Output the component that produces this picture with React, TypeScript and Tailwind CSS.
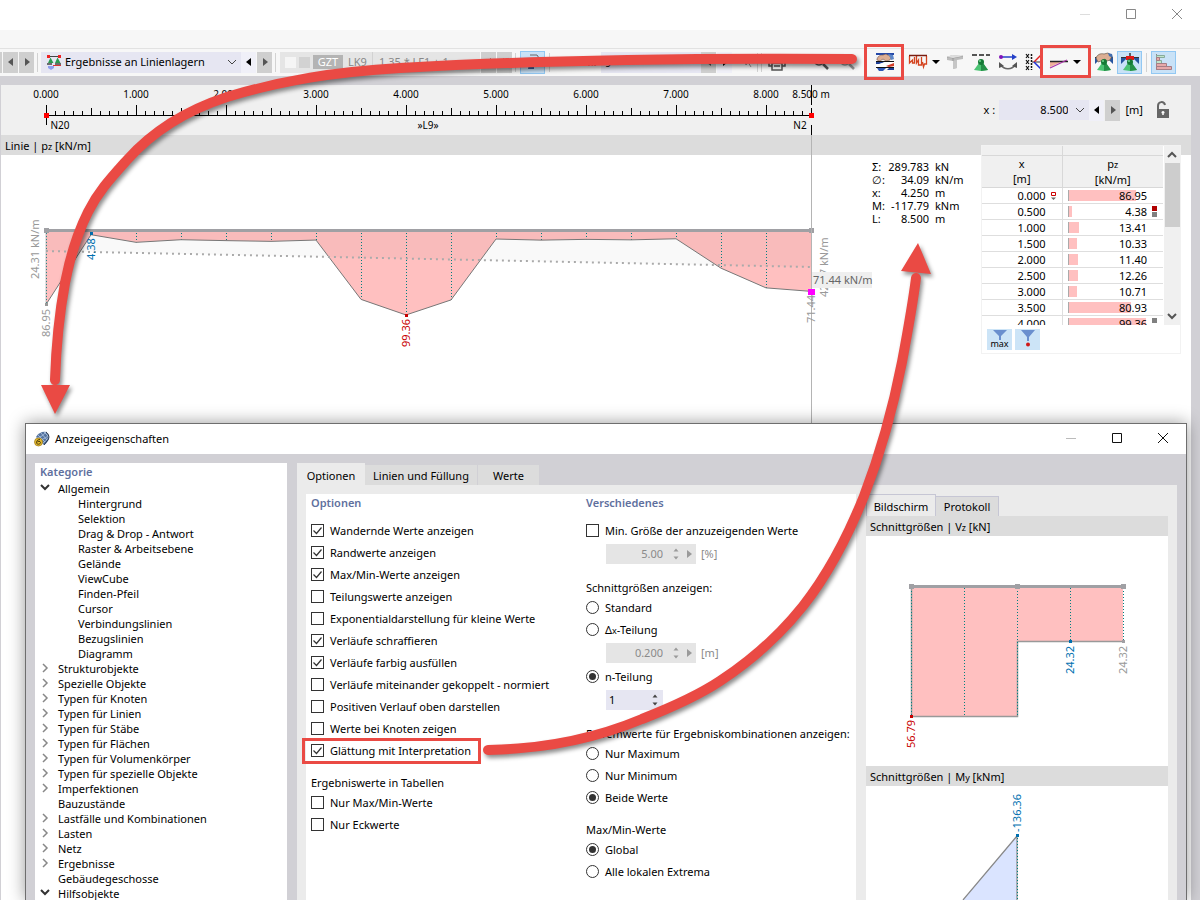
import { useState } from "react";
import type { ReactNode } from "react";
import clsx from "clsx";

const forces = [
    86.95, 4.38, 13.41, 10.33, 11.4, 12.26, 10.71, 80.93, 99.36, 81.6, 9.5, 10.8, 9.9, 10.5, 9.2, 44, 67.3, 71.44,
];

const tableRows = [
    { x: "0.000", value: 86.95, mark: "start" },
    { x: "0.500", value: 4.38, mark: "min" },
    { x: "1.000", value: 13.41 },
    { x: "1.500", value: 10.33 },
    { x: "2.000", value: 11.4 },
    { x: "2.500", value: 12.26 },
    { x: "3.000", value: 10.71 },
    { x: "3.500", value: 80.93 },
    { x: "4.000", value: 99.36, mark: "max" },
];

const stats = [
    ["Σ:", "289.783", "kN"],
    ["∅:", "34.09", "kN/m"],
    ["x:", "4.250", "m"],
    ["M:", "-117.79", "kNm"],
    ["L:", "8.500", "m"],
];

const categories: { label: string; state?: "open" | "closed"; child?: boolean }[] = [
    { label: "Allgemein", state: "open" },
    { label: "Hintergrund", child: true },
    { label: "Selektion", child: true },
    { label: "Drag & Drop - Antwort", child: true },
    { label: "Raster & Arbeitsebene", child: true },
    { label: "Gelände", child: true },
    { label: "ViewCube", child: true },
    { label: "Finden-Pfeil", child: true },
    { label: "Cursor", child: true },
    { label: "Verbindungslinien", child: true },
    { label: "Bezugslinien", child: true },
    { label: "Diagramm", child: true },
    { label: "Strukturobjekte", state: "closed" },
    { label: "Spezielle Objekte", state: "closed" },
    { label: "Typen für Knoten", state: "closed" },
    { label: "Typen für Linien", state: "closed" },
    { label: "Typen für Stäbe", state: "closed" },
    { label: "Typen für Flächen", state: "closed" },
    { label: "Typen für Volumenkörper", state: "closed" },
    { label: "Typen für spezielle Objekte", state: "closed" },
    { label: "Imperfektionen", state: "closed" },
    { label: "Bauzustände" },
    { label: "Lastfälle und Kombinationen", state: "closed" },
    { label: "Lasten", state: "closed" },
    { label: "Netz", state: "closed" },
    { label: "Ergebnisse", state: "closed" },
    { label: "Gebäudegeschosse" },
    { label: "Hilfsobjekte", state: "open" },
];

const displayOptions = [
    { label: "Wandernde Werte anzeigen", on: true },
    { label: "Randwerte anzeigen", on: true },
    { label: "Max/Min-Werte anzeigen", on: true },
    { label: "Teilungswerte anzeigen", on: false },
    { label: "Exponentialdarstellung für kleine Werte", on: false },
    { label: "Verläufe schraffieren", on: true },
    { label: "Verläufe farbig ausfüllen", on: true },
    { label: "Verläufe miteinander gekoppelt - normiert", on: false },
    { label: "Positiven Verlauf oben darstellen", on: false },
    { label: "Werte bei Knoten zeigen", on: false },
    { label: "Glättung mit Interpretation", on: true },
];

/* ---------- small shared parts ---------- */

function Triangle({ dir, className }: { dir: "left" | "right" | "down"; className?: string }) {
    const d = { left: "M6 0v8L1 4z", right: "M2 0v8l5-4z", down: "M0 2h8L4 6z" }[dir];
    return (
        <svg className={clsx("h-2 w-2 shrink-0", className)} viewBox="0 0 8 8" fill="currentColor">
            <path d={d} />
        </svg>
    );
}

function Chevron({ dir = "down", className }: { dir?: "down" | "up" | "right"; className?: string }) {
    const d = { down: "M1 3l4 4 4-4", up: "M1 7l4-4 4 4", right: "M3 1l4 4-4 4" }[dir];
    return (
        <svg className={clsx("h-[10px] w-[10px] shrink-0", className)} viewBox="0 0 10 10" fill="none" stroke="currentColor">
            <path d={d} />
        </svg>
    );
}

function StepButton({ dir, light }: { dir: "left" | "right"; light?: boolean }) {
    return (
        <button
            aria-label={dir === "left" ? "Zurück" : "Weiter"}
            className={clsx(
                "flex h-[21px] w-[15px] shrink-0 items-center justify-center",
                light ? "bg-[#f0f0f8] text-black" : "bg-[#cfcfcf] text-[#555]"
            )}
        >
            <Triangle dir={dir} />
        </button>
    );
}

function Sep() {
    return <div className="h-[19px] w-px shrink-0 bg-[#d2d2d2]" />;
}

function WindowButtons({ color, dim }: { color: string; dim: string }) {
    return (
        <div className="ml-auto flex items-center">
            <button aria-label="Minimieren" className="flex h-[30px] w-[46px] items-center justify-center">
                <svg className="h-3 w-3" viewBox="0 0 12 12" stroke={dim}>
                    <path d="M1 5.5h10" />
                </svg>
            </button>
            <button aria-label="Maximieren" className="flex h-[30px] w-[46px] items-center justify-center">
                <svg className="h-3 w-3" viewBox="0 0 12 12" fill="none" stroke={color}>
                    <path d="M1.500 0.500h9v9h-9z" />
                </svg>
            </button>
            <button aria-label="Schließen" className="flex h-[30px] w-[46px] items-center justify-center">
                <svg className="h-3 w-3" viewBox="0 0 12 12" fill="none" stroke={color}>
                    <path d="M1 0l10 10M11 0L1 10" />
                </svg>
            </button>
        </div>
    );
}

function CheckRow({ label, on }: { label: string; on?: boolean }) {
    return (
        <label className="flex h-[22px] items-center gap-[6px] whitespace-nowrap">
            <span className="relative mb-[2px] flex h-[13px] w-[13px]">
                <input
                    type="checkbox"
                    defaultChecked={on}
                    className="peer h-[13px] w-[13px] appearance-none border border-[#333] bg-white"
                />
                <svg
                    className="pointer-events-none absolute inset-0 hidden h-[13px] w-[13px] peer-checked:block"
                    viewBox="0 0 13 13"
                    fill="none"
                    stroke="#333"
                    strokeWidth="1.2"
                >
                    <path d="M2.500 6.500l3 3 5-6" />
                </svg>
            </span>
            {label}
        </label>
    );
}

function RadioRow({ name, on, children }: { name: string; on?: boolean; children: ReactNode }) {
    return (
        <label className="flex h-[22px] items-center gap-[6px] whitespace-nowrap">
            <input
                type="radio"
                name={name}
                defaultChecked={on}
                className="mb-[2px] flex h-[13px] w-[13px] appearance-none items-center justify-center rounded-full border border-[#333] bg-white checked:before:h-[7px] checked:before:w-[7px] checked:before:rounded-full checked:before:bg-[#333]"
            />
            <span>{children}</span>
        </label>
    );
}

function Spinner() {
    return (
        <svg className="h-3 w-[6px] shrink-0" viewBox="0 0 6 12" fill="currentColor">
            <path d="M0.500 3.500h5L3 0.500zM0.500 8.500h5L3 11.500z" />
        </svg>
    );
}

function DisabledNumber({ value, unit }: { value: string; unit: string }) {
    return (
        <div className="mt-[2px] ml-5 flex h-5 items-center text-[#8a8a8a]">
            <div className="flex h-5 w-[90px] items-center bg-[#e5e5e5] pr-[3px] text-[#9a9a9a]">
                <input
                    disabled
                    aria-label={unit}
                    defaultValue={value}
                    className="w-[60px] min-w-0 bg-transparent text-right text-[11px] text-[#8a8a8a]"
                />
                <div className="ml-[10px] flex items-center gap-[6px]">
                    <Spinner />
                    <Triangle dir="right" />
                </div>
            </div>
            <span className="ml-[5px]">{unit}</span>
        </div>
    );
}

/* ---------- toolbar icons ---------- */

function SupportIcon() {
    return (
        <svg className="h-4 w-4 shrink-0" viewBox="0 0 16 16">
            <path d="M2 2.500h12" stroke="#444" />
            <path d="M1 1h3v3H1zM12 1h3v3h-3z" fill="#e22" />
            <path d="M4.500 3.500l3 5.500H2zM11.500 3.500l3 5.500H9z" fill="#2b9a52" />
            <path d="M1 10h5M9 10h6" stroke="#444" strokeWidth="1.500" />
            <path d="M7 11.500h8" stroke="#d33" />
            <path d="M2 12h6v2l-3 2-3-2z" fill="#8f9ff0" />
        </svg>
    );
}

function HandFlagIcon() {
    return (
        <svg className="h-[20px] w-[20px]" viewBox="0 0 20 20">
            <path d="M1 1h18v2H1z" fill="#2448a8" />
            <path d="M1 4h18v4H1z" fill="#eceff5" />
            <path d="M2 7c1-3 3-4 6-4l3-1 5 3-1 3-4 1-3-2-3 2-3-1z" fill="#dcae93" stroke="#7a584a" strokeWidth=".6" />
            <path d="M13 2l5 1 1 4-3 1-1-3z" fill="#5d86c7" />
            <path d="M1 9.500h18" stroke="#111" />
            <path d="M1 10h9l-5 2H1z" fill="#1d3f96" />
            <path d="M10 10h9v3l-9 2H1v-2z" fill="#fff" />
            <path d="M11 14l8-3v3l-5 1z" fill="#d43c27" />
            <path d="M1 15.500h18" stroke="#111" />
            <path d="M2 16h9l-3 3H4z" fill="#2b57b8" />
            <path d="M14 16h5v2h-7z" fill="#1d3f96" />
        </svg>
    );
}

function DiagramIcon() {
    return (
        <svg className="h-4 w-[20px]" viewBox="0 0 20 16" fill="none">
            <path d="M1.500 2v7l3-3v3h2V3M8.500 2v7l2-3v5h3V3M14.500 8l1 5 1-3h2V2" stroke="#d4431e" strokeWidth="1.300" />
            <path d="M1 1.500h18" stroke="#7a1c10" strokeWidth="1.500" />
        </svg>
    );
}

function BeamIcon() {
    return (
        <svg className="h-[18px] w-[18px]" viewBox="0 0 18 18">
            <path d="M1 4l5-2 11 1v3l-6 1v8l-4 1V8L1 7z" fill="#bcbcbc" />
            <path d="M7 8l4-1v8l-4 1z" fill="#c6c6c6" />
            <path d="M1 4l6 1v3M7 5l10-2" stroke="#8d8d8d" fill="none" strokeWidth=".7" />
            <path d="M1 4l5-2 11 1-10 2z" fill="#dedede" />
        </svg>
    );
}

function ConeIcon({ top }: { top: "dash" | "hand" | "red" }) {
    return (
        <svg className="h-[20px] w-[20px]" viewBox="0 0 20 20">
            {top === "dash" && <path d="M1 3h5M8 3h5M15 3h4" stroke="#555" strokeWidth="2" />}
            {top !== "dash" && <path d="M1 6v6l6-6zM19 6v6l-6-6z" fill="#25549f" />}
            {top !== "dash" && <path d="M1 5.500h18" stroke="#333" />}
            {top === "hand" && (
                <path d="M2 6c1-3 4-5 8-4l4-1 4 3-2 4-3 1-2-2-4 2-3 1z" fill="#dcae93" stroke="#6a5a4d" strokeWidth=".7" />
            )}
            {top === "hand" && <path d="M14 1l4 1 1 4-4-2z" fill="#416dad" />}
            {top === "red" && <path d="M10 1v4" stroke="#333" strokeWidth="1.500" />}
            {top === "red" && <path d="M6 4h8v4H6z" fill="#e01818" />}
            <path d="M8 11h4l5 7-7 1-7-1z" fill="#4cc474" />
            <path d="M10 11h2l5 7-7 1z" fill="#259048" />
            <circle cx="10" cy="10" r="3" fill="#157a36" />
            <circle cx="9" cy="9" r="1" fill="#73d68e" />
        </svg>
    );
}

function SwapIcon() {
    return (
        <svg className="h-[18px] w-[20px]" viewBox="0 0 20 18" fill="none">
            <path d="M3 4h12" stroke="#2440c8" strokeWidth="1.500" />
            <circle cx="3" cy="4" r="2" fill="#8112b8" />
            <path d="M14 1l5 3-5 3z" fill="#2440c8" />
            <path d="M3 12c3 5 11 5 14 0" stroke="#666" strokeWidth="1.500" />
            <path d="M1 15V9l5 4zM19 15V9l-5 4z" fill="#555" />
        </svg>
    );
}

function AxesIcon() {
    return (
        <svg className="h-[18px] w-[18px]" viewBox="0 0 18 18" fill="none">
            <path d="M1 1l3 4M4 1L1 5M1 7l3 4M4 7l-3 4M1 13l3 4M4 13l-3 4" stroke="#111" strokeWidth="1.200" />
            <path d="M6.500 1v16" stroke="#111" strokeDasharray="2 1" strokeWidth="1.500" />
            <path d="M7 9h8" stroke="#333" />
            <path d="M9 9l7-7" stroke="#e32020" strokeWidth="1.500" />
            <path d="M9 9l7 7" stroke="#2030d8" strokeWidth="1.500" />
        </svg>
    );
}

function SmoothIcon() {
    return (
        <svg className="h-4 w-[20px]" viewBox="0 0 20 16" fill="none">
            <path d="M1 8h11L1 13z" fill="#f0b09a" />
            <path d="M1 7.500h18" stroke="#222" strokeWidth="1.500" />
            <path d="M1 14L18 6" stroke="#a833a8" strokeWidth="1.300" />
        </svg>
    );
}

function BarsIcon() {
    return (
        <svg className="h-[18px] w-[18px]" viewBox="0 0 18 18" fill="none">
            <path d="M1.500 1v16" stroke="#888" />
            <path d="M1.500 2.500h8v2h-8zM1.500 7.500h5v3h-5z" fill="#c3e4cb" stroke="#86ab9c" />
            <path d="M1.500 4.500h3v3h-3zM1.500 10.500h10v3h-10zM1.500 13.500h15v3h-15z" fill="#e7a9a9" stroke="#a67d85" />
        </svg>
    );
}

function SearchIcon({ color }: { color: string }) {
    return (
        <svg className="h-[18px] w-[18px]" viewBox="0 0 18 18" fill="none" stroke={color}>
            <circle cx="7" cy="7" r="5" strokeWidth="1.500" />
            <path d="M11 11l5 5" strokeWidth="2.500" />
        </svg>
    );
}

function PrintIcon() {
    return (
        <svg className="h-[18px] w-[18px]" viewBox="0 0 18 18" fill="none" stroke="#555" strokeWidth="1.500">
            <path d="M4 6V2h10v4M4 13H1V7h16v6h-3M4 10h10v7H4zM6 13h6" />
        </svg>
    );
}

function LockIcon() {
    return (
        <svg className="h-[18px] w-4" viewBox="0 0 16 18">
            <path d="M3 8V5c0-5 6-5 7-1" fill="none" stroke="#666" strokeWidth="2" />
            <path d="M2 8h12v9H2z" fill="#666" />
            <path d="M8 10v4M6.500 11.500h3" stroke="#fff" strokeWidth="1.500" />
        </svg>
    );
}

function AppIcon() {
    return (
        <svg className="h-4 w-4" viewBox="0 0 16 16">
            <path d="M2 6c2-4 7-6 10-5l3 4c1 3-2 7-5 9L7 11z" fill="#54739f" />
            <path d="M4 4l7 7M7 2l6 7M10 1l5 5M3 7c4-1 7-3 9-6M6 9c4-1 7-3 9-5M9 12c3-2 5-4 6-7" stroke="#bed1ea" strokeWidth=".7" fill="none" />
            <path d="M12 1c3 2 4 6 1 9l-3 4" stroke="#26344a" fill="none" />
            <circle cx="4.500" cy="11" r="4" fill="#e8be32" stroke="#9b7411" strokeWidth=".7" />
            <path d="M6 8.500c-3 0-3.500 2-3.500 3 0 2.500 4 2 4 0 0-1.500-3-1.700-3.500 0" fill="none" stroke="#4b3a08" />
        </svg>
    );
}

/* ---------- main window ---------- */

function Toolbar() {
    return (
        <div className="flex h-7 items-center overflow-hidden border-t border-[#e2e2e2] bg-[#f7f7f7] pb-px">
            <div className="flex items-center gap-[1px]">
                <span className="h-[21px] w-[2px] bg-[#cfcfcf]" />
                <StepButton dir="left" />
                <StepButton dir="right" />
            </div>
            <div className="mx-[3px] flex">
                <Sep />
            </div>
            <div className="flex h-[21px] w-[200px] shrink-0 items-center bg-[#e6e6f2] pr-1 pl-[5px]">
                <SupportIcon />
                <select
                    aria-label="Ergebnistyp"
                    className="ml-[3px] min-w-0 flex-1 appearance-none bg-transparent text-[11px] leading-4"
                >
                    <option>Ergebnisse an Linienlagern</option>
                </select>
                <Chevron className="text-[#444]" />
            </div>
            <div className="mr-[3px] flex gap-[1px]">
                <StepButton dir="left" light />
                <StepButton dir="right" />
            </div>
            <Sep />
            <div className="ml-1 flex h-[21px] w-[200px] shrink-0 items-center bg-[#e5e5e5] pl-[5px] text-[#888]">
                <span className="h-[11px] w-[11px] bg-[#f5f5f5]" />
                <span className="ml-[3px] h-[11px] w-[11px] bg-[#d2d2d2]" />
                <span className="ml-[3px] h-[14px] w-[30px] bg-[#b4b4b4] text-center leading-[14px] text-white">GZT</span>
                <span className="ml-[5px] w-6">LK9</span>
                <span className="mr-[6px] h-[21px] w-px bg-[#d2d2d2]" />
                <span className="whitespace-nowrap">1.35 * LF1 + 1</span>
            </div>
            <div className="mr-[3px] ml-[1px] flex gap-[1px]">
                <StepButton dir="left" />
                <StepButton dir="right" />
            </div>
            <Sep />
            <button
                aria-label="Objektinformation"
                className="mx-1 flex h-[23px] w-[25px] shrink-0 items-center justify-center border border-[#92c8f3] bg-[#c9e2f7]"
            >
                <svg className="h-4 w-4" viewBox="0 0 16 16" fill="none">
                    <path d="M5 1h7l2 3v7H9" stroke="#666" />
                    <path d="M3 15l1-6 5 1v5z" fill="#3b62a0" />
                </svg>
            </button>
            <Sep />
            <label htmlFor="line-no" className="ml-[5px] w-[46px] shrink-0 whitespace-nowrap">
                Linie Nr.
            </label>
            <input id="line-no" defaultValue="9" className="h-[21px] w-[100px] shrink-0 bg-[#e6e6f2] pl-1 text-[11px]" />
            <div className="flex gap-[1px]">
                <StepButton dir="left" />
                <StepButton dir="right" light />
            </div>
            <svg className="ml-2 h-4 w-4 shrink-0" viewBox="0 0 16 16" fill="none" stroke="#999">
                <path d="M4 3l8 4-4 1 3 5M4 3l2 8 2-3" />
            </svg>
            <div className="ml-px flex gap-[3px]">
                <Sep />
                <Sep />
            </div>
            <div className="ml-[6px] flex w-[88px] shrink-0 items-center justify-between">
                <PrintIcon />
                <div className="flex gap-2">
                    <SearchIcon color="#555" />
                    <SearchIcon color="#999" />
                </div>
            </div>
            <div className="ml-auto flex shrink-0 items-center pr-6">
                <button aria-label="Anzeigeeigenschaften">
                    <HandFlagIcon />
                </button>
                <div className="ml-[13px] flex items-center gap-1">
                    <DiagramIcon />
                    <Triangle dir="down" />
                </div>
                <div className="ml-[6px] flex items-center gap-[7px]">
                    <BeamIcon />
                    <ConeIcon top="dash" />
                    <SwapIcon />
                    <AxesIcon />
                </div>
                <div className="ml-[6px] flex items-center gap-1">
                    <SmoothIcon />
                    <Triangle dir="down" />
                </div>
                <div className="ml-[13px] flex items-center gap-[3px]">
                    <ConeIcon top="hand" />
                    <span className="flex h-[23px] w-[25px] items-center justify-center border border-[#92c8f3] bg-[#c9e2f7]">
                        <ConeIcon top="red" />
                    </span>
                    <span className="px-px">
                        <Sep />
                    </span>
                    <span className="flex h-[23px] w-[25px] items-center justify-center border border-[#92c8f3] bg-[#c9e2f7]">
                        <BarsIcon />
                    </span>
                </div>
            </div>
        </div>
    );
}

function Ruler() {
    return (
        <svg className="h-[50px] w-[860px] shrink-0" viewBox="0 85 860 50" fontSize="10" textAnchor="middle">
            <path d="M46 115.500H811" stroke="#000" />
            {Array.from({ length: 86 }, (_, i) => {
                const top = i % 10 === 0 ? 105 : i % 5 === 0 ? 108 : 111;
                return <path key={i} d={`M${46.5 + i * 9} ${top}V115`} stroke="#000" />;
            })}
            {[0, 1, 2, 3, 4, 5, 6, 7, 8].map((m) => (
                <text key={m} x={46 + m * 90} y="98">
                    {m}.000
                </text>
            ))}
            <text x="811" y="98">
                8.500 m
            </text>
            <path d="M46.500 105v20M811.500 85v20M811.500 125v10" stroke="#000" />
            <path d="M44 113h5v5h-5zM809 113h5v5h-5z" fill="#f00" />
            <text x="60" y="129">
                N20
            </text>
            <text x="428" y="129">
                »L9»
            </text>
            <text x="800" y="129">
                N2
            </text>
        </svg>
    );
}

function VerticalText({ x, y, fill, children }: { x: number; y: number; fill: string; children: ReactNode }) {
    return (
        <text transform={`translate(${x} ${y}) rotate(-90)`} fill={fill}>
            {children}
        </text>
    );
}

function ForceChart() {
    const points = forces.map((v, i) => [46 + i * 45, 231 + v * 0.845]);
    const line = points.map((p) => p.join(" ")).join("L");
    return (
        <svg className="h-[268px] w-[870px] shrink-0 overflow-visible" viewBox="0 155 870 268" fontSize="11">
            <path d={`M46 231L${line}L811 231z`} fill="#ffc0c0" />
            <path d="M46 231v20L811 267v-36z" fill="#000" opacity=".025" />
            {points.map(([x, y]) => (
                <path key={x} d={`M${x + 0.5} 233V${y}`} stroke="#008080" strokeDasharray="1 2" />
            ))}
            <path d={`M${line}`} fill="none" stroke="#777" />
            <path d="M46 251L811 267" stroke="#aaa" strokeWidth="2" strokeDasharray="2 4" />
            <path d="M46 231V304" stroke="#999" strokeWidth="1" opacity=".6" />
            <path d="M46 230.500H811" stroke="#a0a0a4" strokeWidth="3" />
            <path d="M44 228h5v5h-5zM809 228h5v5h-5z" fill="#a0a0a4" />
            <path d="M45 303h3v3h-3z" fill="#999" />
            <path d="M90 232h3v3h-3z" fill="#0070b0" />
            <path d="M405 314h3v3h-3z" fill="#c80000" />
            <path d="M811.500 135V423" stroke="#b4b4b4" />
            <VerticalText x={39} y={279} fill="#999">24.31 kN/m</VerticalText>
            <VerticalText x={50} y={337} fill="#999">86.95</VerticalText>
            <VerticalText x={95} y={260} fill="#0070b0">4.38</VerticalText>
            <VerticalText x={410} y={347} fill="#c80000">99.36</VerticalText>
            <VerticalText x={815} y={323} fill="#999">71.44</VerticalText>
            <VerticalText x={828} y={297} fill="#999">42.87 kN/m</VerticalText>
            <path d="M812 272h60v16h-60z" fill="#efefef" />
            <path d="M808 289h7v6h-7z" fill="#f0f" />
            <text x="813" y="284" fill="#666">
                71.44 kN/m
            </text>
        </svg>
    );
}

function ValueTable() {
    return (
        <div className="-mt-[10px] mr-[10px] ml-auto h-[209px] w-[200px] shrink-0 border border-[#f2f2f2] bg-white">
            <div className="flex">
                <div className="h-[179px] flex-1 overflow-hidden pr-px">
                    <table className="w-full table-fixed border-collapse text-[11px] leading-[15px]">
                        <thead className="bg-[#f0f0f0]">
                            <tr className="h-[9px]">
                                <th className="w-[80px] border-r border-b border-[#d8d8d8]" />
                                <th className="border-b border-[#d8d8d8]" />
                            </tr>
                            <tr>
                                <th className="h-8 border-r border-b border-[#d8d8d8] p-0 text-center font-normal">
                                    x<br />[m]
                                </th>
                                <th className="border-b border-[#d8d8d8] p-0 text-center font-normal">
                                    p<span className="text-[9px]">z</span>
                                    <br />
                                    [kN/m]
                                </th>
                            </tr>
                        </thead>
                        <tbody>
                            {tableRows.map((row) => (
                                <tr key={row.x}>
                                    <td className="relative h-4 border-r border-b border-[#dedede] p-0 pr-4 text-right">
                                        {row.x}
                                        {row.mark === "start" && (
                                            <svg className="absolute top-1 right-[5px] h-2 w-[7px]" viewBox="0 0 7 8">
                                                <path d="M1.500 0.500h4v3h-4z" fill="none" stroke="#c00" />
                                                <path d="M1 5.500h5l-2.500 2.500z" fill="#666" />
                                            </svg>
                                        )}
                                    </td>
                                    <td className="relative h-4 border-b border-[#dedede] p-0 pr-4 text-right">
                                        <span
                                            className="absolute top-[2px] left-[5px] h-[11px] border-l border-[#aaa] bg-[#ffc0c0]"
                                            style={{ width: `${Math.round(1 + row.value * 0.77)}px` }}
                                        />
                                        <span className="relative">{row.value.toFixed(2)}</span>
                                        {row.mark === "min" && (
                                            <span className="absolute top-[2px] right-[6px] h-[5px] w-[5px] bg-[#b00000]" />
                                        )}
                                        {(row.mark === "min" || row.mark === "max") && (
                                            <span
                                                className={clsx(
                                                    "absolute right-[6px] h-[5px] w-[5px] bg-[#808080]",
                                                    row.mark === "min" ? "top-2" : "top-[2px]"
                                                )}
                                            />
                                        )}
                                    </td>
                                </tr>
                            ))}
                        </tbody>
                    </table>
                </div>
                <div className="flex w-4 flex-col items-center bg-[#f0f0f0] text-[#555]">
                    <Chevron dir="up" className="mt-1 mb-[3px] [stroke-width:2]" />
                    <div className="h-16 w-[15px] bg-[#cdcdcd]" />
                    <Chevron className="mt-auto mb-1 [stroke-width:2]" />
                </div>
            </div>
            <div className="flex gap-[3px] pt-1 pl-[5px]">
                <button className="relative flex h-[21px] w-[25px] justify-center bg-[#cce4f7]">
                    <svg className="h-3 w-4" viewBox="0 0 16 12" fill="#6a8fce">
                        <path d="M1 1h14L9 7v4H7V7z" />
                    </svg>
                    <span className="absolute bottom-px text-[9px] leading-[10px]">max</span>
                </button>
                <button aria-label="Filter" className="flex h-[21px] w-[25px] justify-center bg-[#cce4f7]">
                    <svg className="h-5 w-4" viewBox="0 0 16 20" fill="#6a8fce">
                        <path d="M1 1h14L9 8v4H7V8z" />
                        <circle cx="8" cy="15.500" r="2" fill="#d01818" />
                    </svg>
                </button>
            </div>
        </div>
    );
}

function MainWindow() {
    return (
        <>
            <div className="flex h-[30px] items-center bg-white">
                <WindowButtons color="#888" dim="#ddd" />
            </div>
            <div className="h-[18px] bg-[#f7f7f7]" />
            <Toolbar />
            <div className="flex flex-1 flex-col bg-[#d1d0d5] pt-[9px] pr-[9px] pl-px">
                <div className="flex h-[50px] items-center bg-[#f0f0f0]">
                    <div className="-ml-px flex">
                        <Ruler />
                    </div>
                    <div className="ml-auto flex items-center pr-5">
                        <label htmlFor="pos-x" className="w-4">
                            x :
                        </label>
                        <div className="flex h-5 w-[90px] items-center bg-[#e6e6f2] pr-1">
                            <input id="pos-x" defaultValue="8.500" className="w-0 flex-1 bg-transparent pr-[7px] text-right text-[11px]" />
                            <Chevron className="text-[#444]" />
                        </div>
                        <div className="flex gap-[1px]">
                            <StepButton dir="left" light />
                            <StepButton dir="right" />
                        </div>
                        <span className="mr-3 ml-[5px]">[m]</span>
                        <LockIcon />
                    </div>
                </div>
                <div className="h-5 bg-[#dcdcdc] pl-1 leading-[22px]">
                    Linie | p<span className="text-[9px]">z</span> [kN/m]
                </div>
                <div className="flex flex-1 items-start bg-white">
                    <div className="-ml-px flex">
                        <ForceChart />
                    </div>
                    <table className="mt-[5px] text-[11px] leading-[13px]">
                        <tbody>
                            {stats.map(([name, value, unit]) => (
                                <tr key={name}>
                                    <td className="w-4 p-0 pl-[2px]">{name}</td>
                                    <td className="w-[43px] p-0 text-right">{value}</td>
                                    <td className="p-0 pl-[6px]">{unit}</td>
                                </tr>
                            ))}
                        </tbody>
                    </table>
                    <ValueTable />
                </div>
            </div>
        </>
    );
}

/* ---------- dialog ---------- */

function CategoryTree() {
    return (
        <div className="w-[252px] shrink-0 overflow-hidden bg-white pl-[5px]">
            <div className="h-[18px] leading-[18px] font-semibold text-[#5f709e]">Kategorie</div>
            <ul>
                {categories.map((item) => (
                    <li
                        key={item.label}
                        className={clsx("flex h-[15px] items-center whitespace-nowrap", item.child && "pl-5")}
                    >
                        <span className="w-[18px]">
                            {item.state === "open" && <Chevron className="-mt-1 text-[#333] [stroke-width:2]" />}
                            {item.state === "closed" && <Chevron dir="right" className="-mt-px text-[#888] [stroke-width:1.5]" />}
                        </span>
                        {item.label}
                    </li>
                ))}
            </ul>
        </div>
    );
}

function OptionColumns() {
    return (
        <div className="flex min-w-0 flex-1 bg-white pl-[5px]">
            <section className="w-[275px] shrink-0">
                <h3 className="h-[26px] leading-[18px] font-semibold text-[#5f709e]">Optionen</h3>
                {displayOptions.map((o) => (
                    <CheckRow key={o.label} {...o} />
                ))}
                <h4 className="mt-3 h-[18px] leading-[18px]">Ergebniswerte in Tabellen</h4>
                <CheckRow label="Nur Max/Min-Werte" />
                <CheckRow label="Nur Eckwerte" />
            </section>
            <section>
                <h3 className="h-[26px] leading-[18px] font-semibold text-[#5f709e]">Verschiedenes</h3>
                <CheckRow label="Min. Größe der anzuzeigenden Werte" />
                <DisabledNumber value="5.00" unit="[%]" />
                <h4 className="mt-[15px] h-[18px] leading-[18px]">Schnittgrößen anzeigen:</h4>
                <RadioRow name="division">Standard</RadioRow>
                <RadioRow name="division">
                    Δ<span className="text-[9px]">x</span>-Teilung
                </RadioRow>
                <DisabledNumber value="0.200" unit="[m]" />
                <div className="h-[3px]" />
                <RadioRow name="division" on>
                    n-Teilung
                </RadioRow>
                <div className="mt-[2px] ml-5 flex h-5 w-[57px] items-center bg-[#e6e6f2] pr-[5px] text-[#444]">
                    <input aria-label="n" defaultValue="1" className="w-0 flex-1 bg-transparent pl-[3px] text-[11px] text-black" />
                    <Spinner />
                </div>
                <h4 className="mt-[15px] h-[18px] leading-[18px] whitespace-nowrap">
                    Extremwerte für Ergebniskombinationen anzeigen:
                </h4>
                <RadioRow name="combo">Nur Maximum</RadioRow>
                <RadioRow name="combo">Nur Minimum</RadioRow>
                <RadioRow name="combo" on>
                    Beide Werte
                </RadioRow>
                <h4 className="mt-3 h-[18px] leading-[18px]">Max/Min-Werte</h4>
                <RadioRow name="extrema" on>
                    Global
                </RadioRow>
                <RadioRow name="extrema">Alle lokalen Extrema</RadioRow>
            </section>
        </div>
    );
}

function ShearPreview() {
    return (
        <svg className="h-[230px] w-[302px]" viewBox="866 536 302 230" fontSize="11">
            <path d="M911 587H1123v54H1017v75H911z" fill="#ffc0c0" />
            <path d="M911.500 587V716.500H1017.500V641.500H1123" fill="none" stroke="#999" strokeWidth="1.500" />
            <path
                d="M911.500 588V716M964.500 588V716M1017.500 588V716M1070.500 588V641M1123.500 588V641"
                stroke="#008080"
                strokeDasharray="1 2"
            />
            <path d="M911 586.500H1123" stroke="#a0a0a4" strokeWidth="3" />
            <path d="M909 584h5v5h-5zM1015 584h5v5h-5zM1121 584h5v5h-5zM1122 640h3v3h-3z" fill="#a0a0a4" />
            <path d="M1069 640h3v3h-3z" fill="#0070b0" />
            <path d="M910 715h3v3h-3z" fill="#c80000" />
            <VerticalText x={915} y={748} fill="#c80000">56.79</VerticalText>
            <VerticalText x={1074} y={674} fill="#0070b0">24.32</VerticalText>
            <VerticalText x={1127} y={674} fill="#999">24.32</VerticalText>
        </svg>
    );
}

function MomentPreview() {
    return (
        <svg className="h-[114px] w-[302px]" viewBox="866 786 302 114" fontSize="11">
            <path d="M1017 836V900H963z" fill="#dae4ff" />
            <path d="M963 900L1017 836V900" fill="none" stroke="#888" strokeWidth="1.200" />
            <path d="M1017.500 838V900" stroke="#008080" strokeDasharray="1 2" />
            <path d="M1016 834h3v3h-3z" fill="#0070b0" />
            <VerticalText x={1021} y={832} fill="#0070b0">-136.36</VerticalText>
        </svg>
    );
}

function PreviewPane() {
    const [tab, setTab] = useState("Bildschirm");
    return (
        <div className="w-[302px] shrink-0">
            <div className="flex h-[22px] items-end">
                {["Bildschirm", "Protokoll"].map((name) => (
                    <button
                        key={name}
                        onClick={() => setTab(name)}
                        className={clsx(
                            "border border-b-0 border-[#c6c6d4]",
                            tab === name ? "h-[22px] w-[70px] bg-[#ebebeb] pt-[2px]" : "h-5 w-[63px] border-l-0 bg-[#dcdcdc]"
                        )}
                    >
                        {name}
                    </button>
                ))}
            </div>
            <div className="h-5 bg-[#dcdcdc] pl-1 leading-[21px]">
                Schnittgrößen | V<span className="text-[9px]">z</span> [kN]
            </div>
            <div className="bg-white">
                <ShearPreview />
            </div>
            <div className="h-5 bg-[#dcdcdc] pl-1 leading-[21px]">
                Schnittgrößen | M<span className="text-[9px]">y</span> [kNm]
            </div>
            <div className="bg-white">
                <MomentPreview />
            </div>
        </div>
    );
}

const tabs = [
    { name: "Optionen", width: "w-[68px]" },
    { name: "Linien und Füllung", width: "w-[113px]" },
    { name: "Werte", width: "w-[62px]" },
];

function PropertiesDialog() {
    const [tab, setTab] = useState("Optionen");
    return (
        <div
            role="dialog"
            aria-label="Anzeigeeigenschaften"
            className="absolute top-[423px] right-[13px] bottom-0 left-[25px] flex flex-col border border-b-0 border-[#6e6e6e] bg-[#d1d0d5] shadow-[0_0_16px_rgba(0,0,0,0.4)]"
        >
            <div className="flex h-[30px] shrink-0 items-center bg-white pl-2">
                <AppIcon />
                <span className="ml-[5px]">Anzeigeeigenschaften</span>
                <WindowButtons color="#111" dim="#bbb" />
            </div>
            <div className="flex min-h-0 flex-1 gap-[10px] px-[9px] pt-[9px]">
                <CategoryTree />
                <div className="flex min-w-0 flex-1 flex-col">
                    <div className="flex h-[22px] shrink-0 items-end">
                        {tabs.map((t) => (
                            <button
                                key={t.name}
                                onClick={() => setTab(t.name)}
                                className={clsx(
                                    "shrink-0 whitespace-nowrap",
                                    t.width,
                                    tab === t.name ? "h-[22px] bg-[#ebebeb] pt-1" : "h-5 border-r border-[#d1d0d5] bg-[#dcdcdc] pt-px"
                                )}
                            >
                                {t.name}
                            </button>
                        ))}
                    </div>
                    <div className="flex min-h-0 flex-1 gap-[10px] bg-[#ebebeb] px-[9px] pt-[9px]">
                        <OptionColumns />
                        <PreviewPane />
                    </div>
                </div>
            </div>
        </div>
    );
}

/* ---------- red markers and arrows ---------- */

function Annotations() {
    return (
        <svg
            className="pointer-events-none absolute top-0 left-0 h-[900px] w-[1200px] drop-shadow-[2px_3px_2px_rgba(0,0,0,0.45)]"
            viewBox="0 0 1200 900"
            fill="none"
            stroke="#ea4a44"
        >
            <g strokeWidth="10" strokeLinecap="round">
                <path d="M852 59C700 58 540 60 400 68C335 72 283 80 227 97C184 111 152 132 127 160C110 179 98 192 88 212C77 234 70 257 65 283C59 315 56 350 55 380" />
                <path d="M488 750C540 749 592 740 642 719C670 708 696 697 720 681C752 660 779 636 803 606C829 573 848 536 864 496C881 452 893 408 902 362C908 330 913 302 916 278" />
            </g>
            <path d="M41 385H70L55 414zM901 271L931 274L918 243z" fill="#ea4a44" stroke="none" />
        </svg>
    );
}

function Highlights() {
    return (
        <svg
            className="pointer-events-none absolute top-0 left-0 h-[900px] w-[1200px]"
            viewBox="0 0 1200 900"
            fill="none"
            stroke="#ea4a44"
            strokeWidth="3"
        >
            <path d="M865.500 45.500h37v33h-37zM1041.500 46.500h48v30h-48zM303.500 739.500h176v23h-176z" />
        </svg>
    );
}

export default function App() {
    return (
        <div className="relative flex h-screen flex-col overflow-hidden bg-white font-['Noto_Sans',sans-serif] text-[11px] leading-4 text-black">
            <MainWindow />
            <PropertiesDialog />
            <Annotations />
            <Highlights />
        </div>
    );
}
